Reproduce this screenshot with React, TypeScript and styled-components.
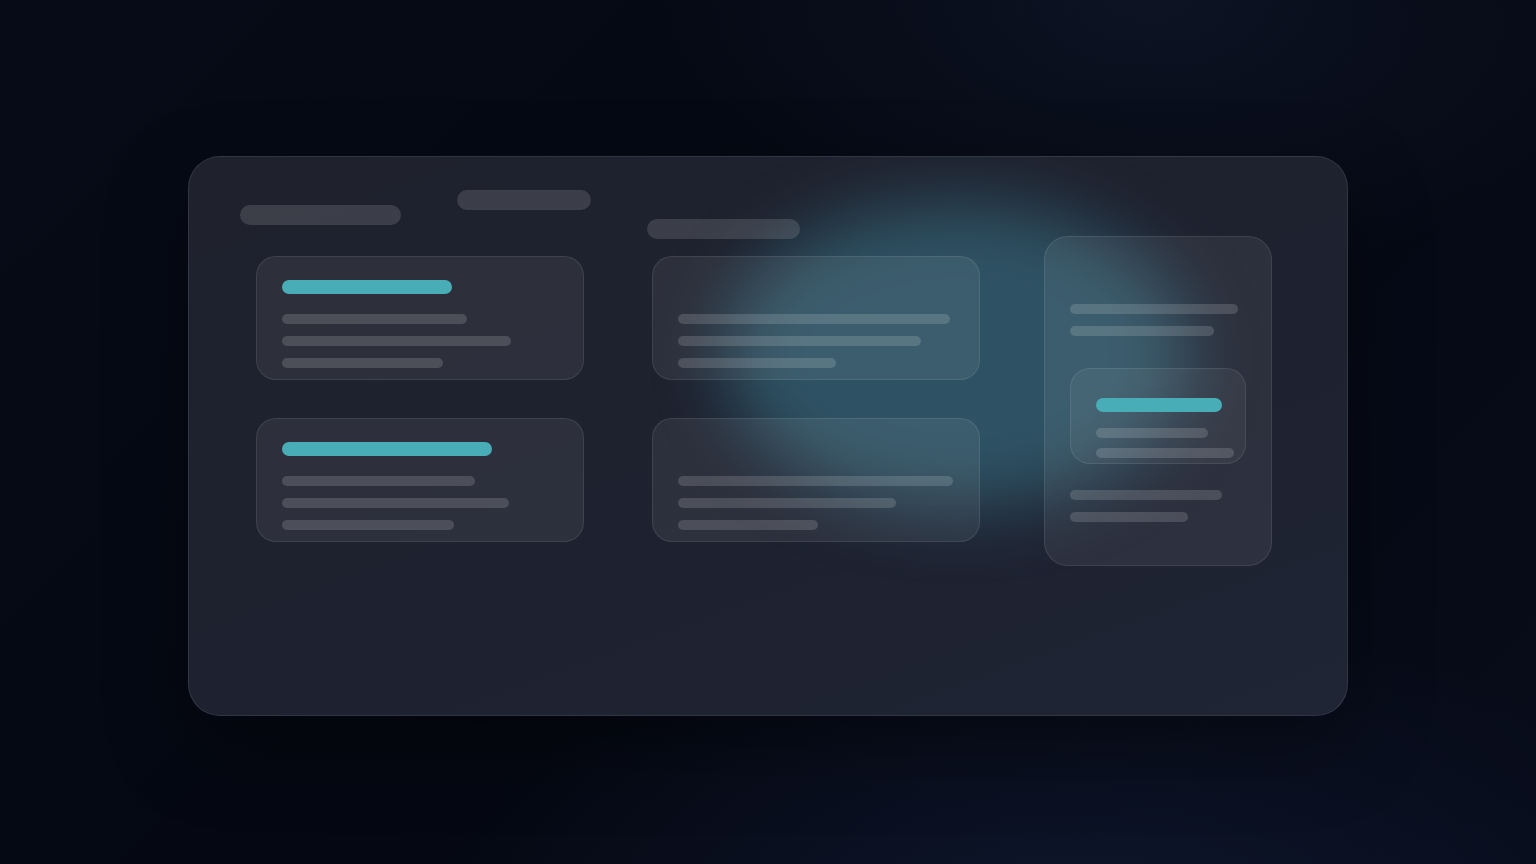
import styled, { createGlobalStyle } from "styled-components";

const GlobalStyle = createGlobalStyle`
  * { box-sizing: border-box; }
  html, body {
    margin: 0;
    padding: 0;
    font-family: "Inter", "Liberation Sans", sans-serif;
    background: #060914;
  }
`;

type Line = number;

const leftCards: { title?: number; lines: Line[] }[][] = [
  [
    { title: 170, lines: [185, 229, 161] },
    { title: 210, lines: [193, 227, 172] },
  ],
  [
    { lines: [272, 243, 158] },
    { lines: [275, 218, 140] },
  ],
];

function App() {
  return (
    <>
      <GlobalStyle />
      <Page>
        <Panel>
          <Glow />
          <Main>
            <Header>
              <HeadBar $w={161} $top={15} />
              <HeadBar $w={134} $top={0} />
              <HeadBar $w={153} $top={29} />
            </Header>
            <CardGrid>
              {[0, 1].map((row) =>
                leftCards.map((col, ci) => {
                  const card = col[row];
                  return (
                    <Card key={`${row}-${ci}`}>
                      <TitleBar $w={card.title ?? 170} $ghost={!card.title} />
                      <Lines>
                        {card.lines.map((w, i) => (
                          <LineBar key={i} $w={w} />
                        ))}
                      </Lines>
                    </Card>
                  );
                })
              )}
            </CardGrid>
          </Main>
          <SideCard>
            <Lines>
              <LineBar $w={168} />
              <LineBar $w={144} />
            </Lines>
            <InnerCard>
              <TitleBar $w={126} />
              <Lines $gap={10} $top={16}>
                <LineBar $w={112} />
                <LineBar $w={138} />
              </Lines>
            </InnerCard>
            <Lines $top={26}>
              <LineBar $w={152} />
              <LineBar $w={118} />
            </Lines>
          </SideCard>
        </Panel>
      </Page>
    </>
  );
}

const Page = styled.div`
  min-height: 100vh;
  display: flex;
  justify-content: center;
  align-items: flex-start;
  padding-top: 156px;
  background:
    radial-gradient(ellipse 900px 500px at 70% 110%, rgba(20, 32, 60, 0.55), transparent 70%),
    radial-gradient(ellipse 700px 400px at 75% 0%, rgba(20, 30, 52, 0.5), transparent 70%),
    linear-gradient(135deg, #070b17 0%, #050812 50%, #070c1a 100%);
`;

const Panel = styled.div`
  position: relative;
  width: 1160px;
  height: 560px;
  border-radius: 32px;
  border: 1px solid rgba(255, 255, 255, 0.09);
  background: linear-gradient(160deg, #1f222d 0%, #1e2230 60%, #1f2535 100%);
  padding: 33px 0 0 51px;
  display: flex;
  overflow: hidden;
  box-shadow: 0 30px 80px rgba(0, 0, 0, 0.35);
`;

const Glow = styled.div`
  position: absolute;
  left: 535px;
  top: 46px;
  width: 465px;
  height: 305px;
  border-radius: 50%;
  background: rgba(66, 142, 164, 0.45);
  filter: blur(34px);
  pointer-events: none;
`;

const Main = styled.div`
  position: relative;
  display: flex;
  flex-direction: column;
`;

const Header = styled.div`
  display: flex;
  gap: 56px;
  height: 66px;
`;

const HeadBar = styled.div<{ $w: number; $top: number }>`
  width: ${(p) => p.$w}px;
  height: 20px;
  margin-top: ${(p) => p.$top}px;
  border-radius: 10px;
  background: rgba(255, 255, 255, 0.13);
`;

const CardGrid = styled.div`
  display: grid;
  grid-template-columns: 328px 328px;
  grid-auto-rows: 124px;
  column-gap: 68px;
  row-gap: 38px;
  margin-left: 16px;
`;

const Card = styled.div`
  border-radius: 20px;
  border: 1px solid rgba(255, 255, 255, 0.09);
  background: rgba(255, 255, 255, 0.065);
  padding: 23px 25px;
`;

const TitleBar = styled.div<{ $w: number; $ghost?: boolean }>`
  width: ${(p) => p.$w}px;
  height: 14px;
  border-radius: 7px;
  background: #48adb7;
  visibility: ${(p) => (p.$ghost ? "hidden" : "visible")};
`;

const Lines = styled.div<{ $gap?: number; $top?: number }>`
  display: flex;
  flex-direction: column;
  gap: ${(p) => p.$gap ?? 12}px;
  margin-top: ${(p) => p.$top ?? 20}px;
`;

const LineBar = styled.div<{ $w: number }>`
  width: ${(p) => p.$w}px;
  height: 10px;
  border-radius: 5px;
  background: rgba(255, 255, 255, 0.15);
`;

const SideCard = styled.div`
  position: relative;
  width: 228px;
  height: 330px;
  margin-top: 46px;
  margin-left: 64px;
  border-radius: 24px;
  border: 1px solid rgba(255, 255, 255, 0.09);
  background: rgba(255, 255, 255, 0.065);
  padding: 47px 25px 0;
`;

const InnerCard = styled.div`
  width: 176px;
  height: 96px;
  margin-top: 32px;
  border-radius: 20px;
  border: 1px solid rgba(255, 255, 255, 0.09);
  background: rgba(255, 255, 255, 0.05);
  padding: 29px 0 0 25px;
`;

export default App;
